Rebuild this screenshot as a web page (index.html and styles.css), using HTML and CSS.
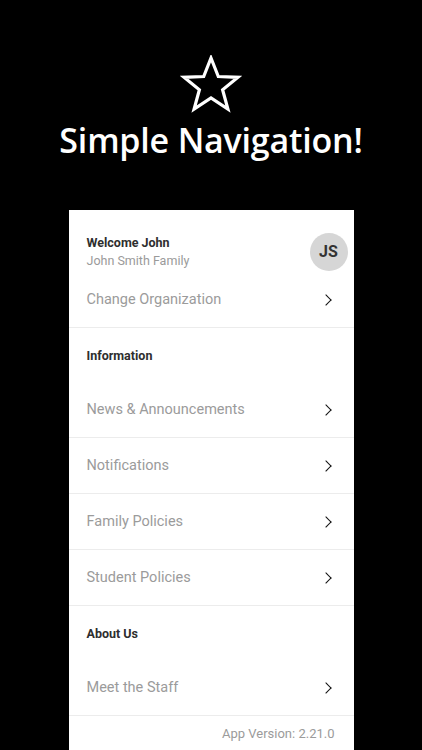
FILE: index.html
```html
<!DOCTYPE html>
<html lang="en">
<head>
    <meta charset="UTF-8">
    <meta name="viewport" content="width=device-width, initial-scale=1.0">
    <title>Simple Navigation</title>
    <link rel="stylesheet" href="styles.css">
</head>
<body>
    <div class="hero">
        <svg class="star" width="62" height="58" viewBox="0 0 62 58">
            <polygon points="31,3 38.3,21.5 58,22.3 42.6,34.8 47.9,54 31,43 14.1,54 19.4,34.8 4,22.3 23.7,21.5" fill="none" stroke="#fff" stroke-width="3.2" stroke-linejoin="miter"/>
        </svg>
        <h1 class="title">Simple Navigation!</h1>
    </div>
    <div class="card">
        <div class="profile">
            <div class="who">
                <div class="welcome">Welcome John</div>
                <div class="family">John Smith Family</div>
            </div>
            <div class="avatar">JS</div>
        </div>
        <ul class="menu">
            <li class="row">Change Organization <span class="chev"></span></li>
            <li class="head">Information</li>
            <li class="row">News &amp; Announcements <span class="chev"></span></li>
            <li class="row">Notifications <span class="chev"></span></li>
            <li class="row">Family Policies <span class="chev"></span></li>
            <li class="row">Student Policies <span class="chev"></span></li>
            <li class="head">About Us</li>
            <li class="row">Meet the Staff <span class="chev"></span></li>
        </ul>
        <div class="version">App Version: 2.21.0</div>
    </div>
</body>
</html>
```

FILE: styles.css
```css
body,ul,li,h1{
    padding: 0;
    margin: 0;
    list-style: none;
}
body{
    background: #000;
    width: 422px;
    height: 750px;
    overflow: hidden;
    display: flex;
    flex-direction: column;
    align-items: center;
}
.hero{
    display: flex;
    flex-direction: column;
    align-items: center;
    padding-top: 55px;
}
.title{
    font-family: "Open Sans", sans-serif;
    font-weight: 600;
    font-size: 34px;
    color: #fff;
    line-height: 40px;
    margin-top: 7px;
    letter-spacing: -0.2px;
}
.card{
    margin-top: 50px;
    width: 285px;
    flex: 1;
    background: #fff;
    font-family: Roboto, sans-serif;
}
.profile{
    display: flex;
    justify-content: space-between;
    align-items: center;
    padding: 21px 6px 0 18px;
    height: 41px;
}
.welcome{
    font-size: 12.5px;
    font-weight: 700;
    color: #2e2e2e;
    line-height: 18px;
}
.family{
    font-size: 12.5px;
    color: #9a9a9a;
    line-height: 18px;
}
.avatar{
    width: 38px;
    height: 38px;
    border-radius: 50%;
    background: #d6d6d6;
    color: #333;
    font-weight: 700;
    font-size: 16px;
    display: flex;
    align-items: center;
    justify-content: center;
}
.row{
    height: 55px;
    border-bottom: 1px solid #ececec;
    display: flex;
    align-items: center;
    justify-content: space-between;
    padding: 0 24px 0 18px;
    font-size: 14.5px;
    color: #9b9b9b;
}
.head{
    height: 54px;
    display: flex;
    align-items: center;
    padding-left: 18px;
    font-size: 12.5px;
    font-weight: 700;
    color: #2e2e2e;
}
.chev{
    width: 7px;
    height: 7px;
    border-right: 1.8px solid #111;
    border-top: 1.8px solid #111;
    transform: rotate(45deg);
}
.version{
    text-align: right;
    padding: 10px 19px 0 0;
    font-size: 13px;
    color: #9b9b9b;
}
```
